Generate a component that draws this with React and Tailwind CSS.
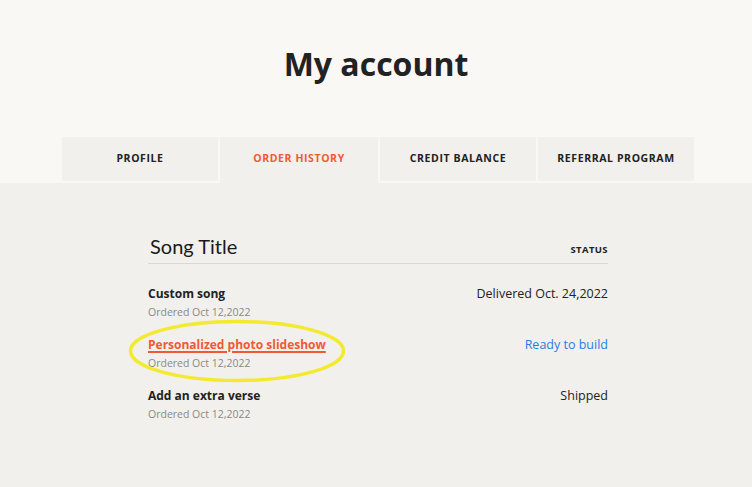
import React from 'react';

const tabs = [
  { label: 'PROFILE' },
  { label: 'ORDER HISTORY', active: true },
  { label: 'CREDIT BALANCE' },
  { label: 'REFERRAL PROGRAM' },
];

const orders = [
  { title: 'Custom song', date: 'Ordered Oct 12,2022', status: 'Delivered Oct. 24,2022' },
  { title: 'Personalized photo slideshow', date: 'Ordered Oct 12,2022', status: 'Ready to build', link: true },
  { title: 'Add an extra verse', date: 'Ordered Oct 12,2022', status: 'Shipped' },
];

export default function App() {
  return (
    <div className="min-h-[487px] w-[752px] bg-[#f1f0ec] font-['Open_Sans',sans-serif] text-[#222]">
      {/* Header */}
      <div className="bg-[#f9f8f5] pt-[42px]">
        <h1 className="text-center text-[32px] font-bold leading-[44px] text-[#222]">My account</h1>
        <div className="mt-[51px] flex gap-[2px] pl-[62px]">
          {tabs.map((t) => (
            <div
              key={t.label}
              className={
                t.active
                  ? 'flex h-[46px] w-[158px] items-center justify-center bg-[#f1f0ec] pb-[2px] text-[10.5px] font-bold tracking-[0.6px] text-[#f05a33]'
                  : 'mb-[2px] flex h-[44px] w-[156px] items-center justify-center bg-[#f1f0ec] text-[10.5px] font-bold tracking-[0.6px] text-[#222]'
              }
            >
              {t.label}
            </div>
          ))}
        </div>
      </div>

      {/* Orders */}
      <div className="relative ml-[148px] w-[460px] pt-[50px]">
        <div className="flex items-end justify-between border-b border-[#d9d8d3] pb-[4px]">
          <div className="pl-[2px] font-['Lato',sans-serif] text-[20px] font-normal leading-[26px] text-[#1a1a1a]">Song Title</div>
          <div className="pb-[2px] text-[9.5px] font-bold tracking-[0.4px] text-[#222]">STATUS</div>
        </div>
        <div className="pt-[21px]">
          {orders.map((o, i) => (
            <div key={i} className="flex h-[51px] justify-between">
              <div>
                <div
                  className={
                    o.link
                      ? 'text-[12px] font-bold leading-[18px] text-[#f05a33] underline decoration-[1.5px] underline-offset-2'
                      : 'text-[12px] font-bold leading-[18px] text-[#222]'
                  }
                >
                  {o.title}
                </div>
                <div className="text-[10.5px] leading-[18px] text-[#8a8985]">{o.date}</div>
              </div>
              <div className={o.link ? 'text-[12.5px] leading-[18px] text-[#2a7de1]' : 'text-[12.5px] leading-[18px] text-[#222]'}>
                {o.status}
              </div>
            </div>
          ))}
        </div>
        <svg className="pointer-events-none absolute left-[-20px] top-[136px]" width="218" height="64" viewBox="0 0 218 64">
          <ellipse cx="109" cy="32" rx="106.5" ry="29.5" fill="none" stroke="#f3ea30" strokeWidth="3.5" />
        </svg>
      </div>
    </div>
  );
}
